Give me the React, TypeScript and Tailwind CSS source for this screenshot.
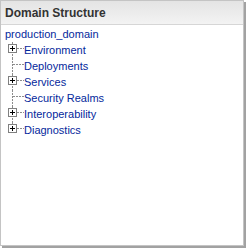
import React from "react";

const items = [
  { label: "Environment", box: true },
  { label: "Deployments", box: false },
  { label: "Services", box: true },
  { label: "Security Realms", box: false },
  { label: "Interoperability", box: true },
  { label: "Diagnostics", box: true },
];

function Connector({ box, last }: { box: boolean; last: boolean }) {
  return (
    <svg width="23" height="16" viewBox="0 0 23 16" className="shrink-0">
      <line
        x1="11.5"
        y1="0"
        x2="11.5"
        y2={last ? 7 : 16}
        stroke="#8c8c8c"
        strokeWidth="1"
        strokeDasharray="2 1"
      />
      <line
        x1={box ? 16 : 12}
        y1="6.5"
        x2="23"
        y2="6.5"
        stroke="#8c8c8c"
        strokeWidth="1"
        strokeDasharray="2 1"
      />
      {box && (
        <g>
          <rect x="7.5" y="2.5" width="8" height="8" fill="#ffffff" stroke="#808080" strokeWidth="1" />
          <line x1="9" y1="6.5" x2="14" y2="6.5" stroke="#000000" strokeWidth="1" />
          <line x1="11.5" y1="4" x2="11.5" y2="9" stroke="#000000" strokeWidth="1" />
        </g>
      )}
    </svg>
  );
}

export default function App() {
  return (
    <div className="w-[246px] h-[248px] bg-white" style={{ fontFamily: '"Liberation Sans", Arial, sans-serif' }}>
      <div className="w-[244px] h-[246px] border border-[#c4c4c4] shadow-[2px_2px_0_#a2a2a2] flex flex-col bg-white">
        <div className="h-[24px] border-b border-[#d6d6d6] bg-gradient-to-b from-[#e4e4e4] to-[#f3f3f3] flex items-center pl-[4px]">
          <span className="text-[12px] font-bold text-[#333333] leading-none">Domain Structure</span>
        </div>
        <div className="flex flex-col">
          <div className="h-[16px] mt-[1px] pl-[4px] flex items-center">
            <span className="text-[11px] leading-[16px] text-[#05289c]">production_domain</span>
          </div>
          {items.map((it, i) => (
            <div key={it.label} className="h-[16px] flex">
              <Connector box={it.box} last={i === items.length - 1} />
              <span className="text-[11px] leading-[16px] text-[#05289c]">{it.label}</span>
            </div>
          ))}
        </div>
      </div>
    </div>
  );
}
